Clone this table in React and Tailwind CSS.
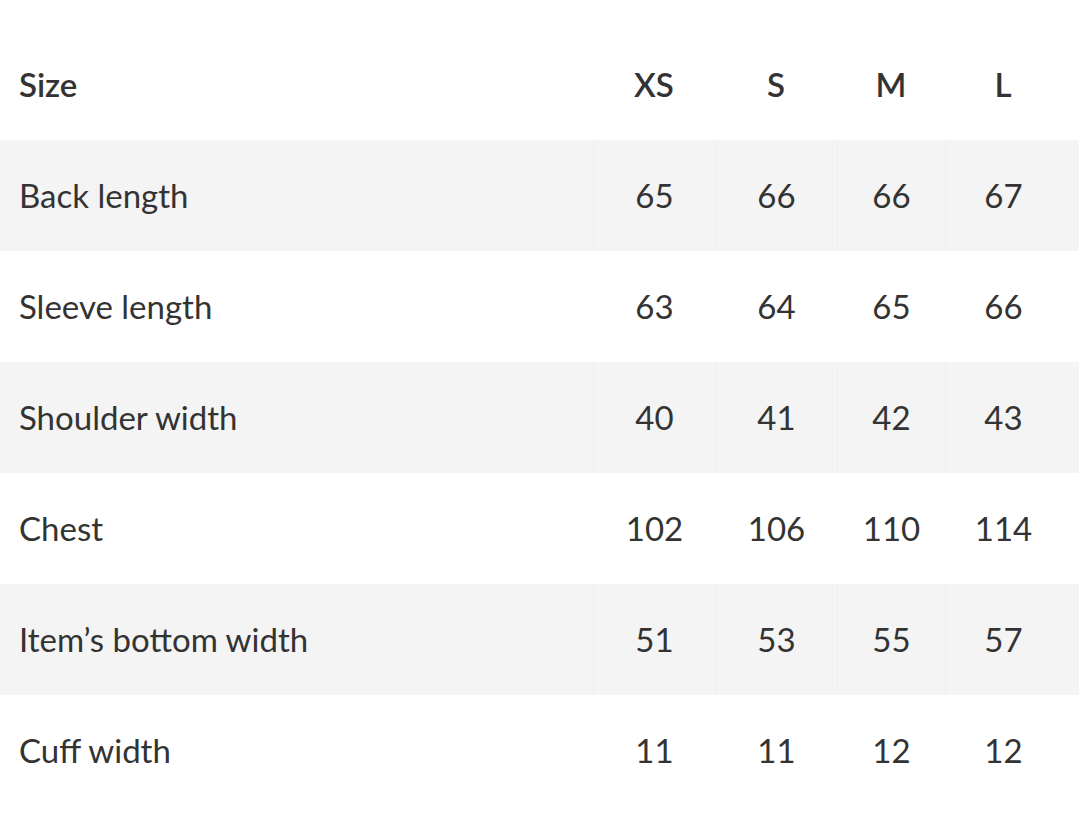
const sizes = ["XS", "S", "M", "L"];

const rows = [
  { label: "Back length", values: [65, 66, 66, 67] },
  { label: "Sleeve length", values: [63, 64, 65, 66] },
  { label: "Shoulder width", values: [40, 41, 42, 43] },
  { label: "Chest", values: [102, 106, 110, 114] },
  { label: "Item\u2019s bottom width", values: [51, 53, 55, 57] },
  { label: "Cuff width", values: [11, 11, 12, 12] },
];

// column widths so the centres land where the reference has them
const cols = ["w-[122px]", "w-[122px]", "w-[108px]", "w-[134px] pr-[18px]"];

export default function App() {
  return (
    <div
      className="w-[1080px] h-[819px] bg-white text-[#333333] pt-[29px]"
      style={{ fontFamily: "Lato, 'Open Sans', sans-serif" }}
    >
      <div className="w-[1079px]">
        <div className="flex h-[111px] items-center text-[33px] font-semibold">
          <div className="w-[593px] pl-[19px]">Size</div>
          {sizes.map((s, i) => (
            <div key={s} className={`${cols[i]} text-center`}>
              {s}
            </div>
          ))}
        </div>
        {rows.map((row, r) => (
          <div
            key={row.label}
            className={`flex h-[111px] text-[33px] ${r % 2 === 0 ? "bg-[#f4f4f4]" : "bg-white"}`}
          >
            <div className="w-[593px] pl-[19px] flex items-center">{row.label}</div>
            {row.values.map((v, i) => (
              <div
                key={i}
                className={`${cols[i]} flex items-center justify-center border-l ${r % 2 === 0 ? "border-[#efefef]" : "border-transparent"}`}
              >
                {v}
              </div>
            ))}
          </div>
        ))}
      </div>
    </div>
  );
}
